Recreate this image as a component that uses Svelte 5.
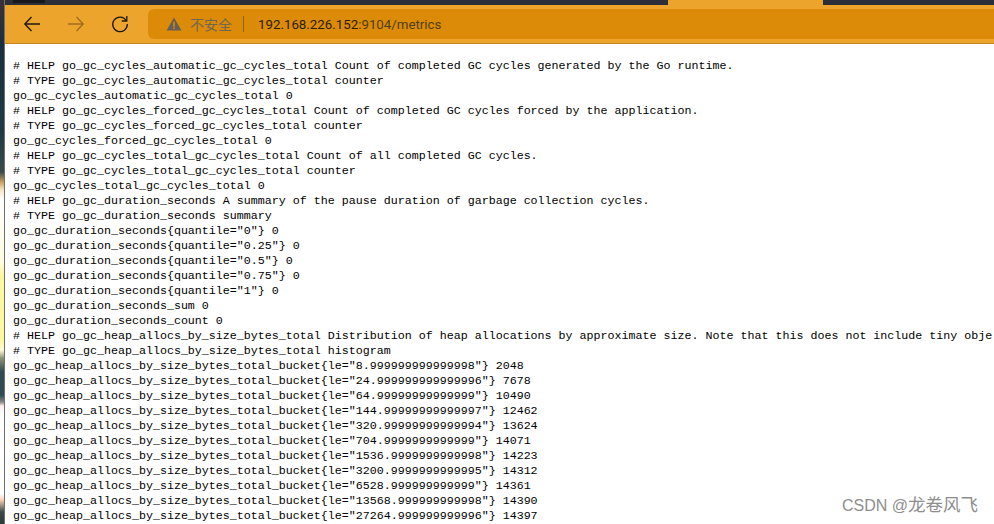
<script>
  const lines = `# HELP go_gc_cycles_automatic_gc_cycles_total Count of completed GC cycles generated by the Go runtime.
# TYPE go_gc_cycles_automatic_gc_cycles_total counter
go_gc_cycles_automatic_gc_cycles_total 0
# HELP go_gc_cycles_forced_gc_cycles_total Count of completed GC cycles forced by the application.
# TYPE go_gc_cycles_forced_gc_cycles_total counter
go_gc_cycles_forced_gc_cycles_total 0
# HELP go_gc_cycles_total_gc_cycles_total Count of all completed GC cycles.
# TYPE go_gc_cycles_total_gc_cycles_total counter
go_gc_cycles_total_gc_cycles_total 0
# HELP go_gc_duration_seconds A summary of the pause duration of garbage collection cycles.
# TYPE go_gc_duration_seconds summary
go_gc_duration_seconds{quantile="0"} 0
go_gc_duration_seconds{quantile="0.25"} 0
go_gc_duration_seconds{quantile="0.5"} 0
go_gc_duration_seconds{quantile="0.75"} 0
go_gc_duration_seconds{quantile="1"} 0
go_gc_duration_seconds_sum 0
go_gc_duration_seconds_count 0
# HELP go_gc_heap_allocs_by_size_bytes_total Distribution of heap allocations by approximate size. Note that this does not include tiny obje
# TYPE go_gc_heap_allocs_by_size_bytes_total histogram
go_gc_heap_allocs_by_size_bytes_total_bucket{le="8.999999999999998"} 2048
go_gc_heap_allocs_by_size_bytes_total_bucket{le="24.999999999999996"} 7678
go_gc_heap_allocs_by_size_bytes_total_bucket{le="64.99999999999999"} 10490
go_gc_heap_allocs_by_size_bytes_total_bucket{le="144.99999999999997"} 12462
go_gc_heap_allocs_by_size_bytes_total_bucket{le="320.99999999999994"} 13624
go_gc_heap_allocs_by_size_bytes_total_bucket{le="704.9999999999999"} 14071
go_gc_heap_allocs_by_size_bytes_total_bucket{le="1536.9999999999998"} 14223
go_gc_heap_allocs_by_size_bytes_total_bucket{le="3200.9999999999995"} 14312
go_gc_heap_allocs_by_size_bytes_total_bucket{le="6528.999999999999"} 14361
go_gc_heap_allocs_by_size_bytes_total_bucket{le="13568.999999999998"} 14390
go_gc_heap_allocs_by_size_bytes_total_bucket{le="27264.999999999996"} 14397`;
</script>

<div class="screen">
  <div class="rail"></div>
  <div class="main">
    <div class="tabstrip"><div class="blackbit"></div><div class="tab"></div></div>
    <div class="toolbar">
      <svg class="icon" viewBox="0 0 20 20"><path d="M18 10H3M9.500 3 2.800 10l6.700 7" fill="none" stroke="#1c1a14" stroke-width="1.300"/></svg>
      <svg class="icon fwd" viewBox="0 0 20 20"><path d="M2 10h15M10.500 3l6.700 7-6.700 7" fill="none" stroke="#a06c1c" stroke-width="1.300"/></svg>
      <svg class="icon reload" viewBox="0 0 20 20"><path d="M16.200 6.500A7.300 7.300 0 1 0 17.300 10" fill="none" stroke="#1c1a14" stroke-width="1.300"/><path d="M16.800 2v5h-5" fill="none" stroke="#1c1a14" stroke-width="1.300"/></svg>
      <div class="omnibox">
        <svg class="warn" viewBox="0 0 18 16"><path d="M9 .5 17.500 15.500H.5Z" fill="#665f55"/><path d="M8.100 5.500h1.800v5.500H8.100zM8.100 12h1.800v1.800H8.100z" fill="#dc8b08"/></svg>
        <span class="insecure">不安全</span>
        <span class="sep"></span>
        <span class="url">192.168.226.152<span class="port">:9104/metrics</span></span>
      </div>
    </div>
    <pre>{lines}</pre>
  </div>
  <div class="mark">CSDN @<span class="cjk">龙卷风飞</span></div>
</div>

<style>
  :global(body) { margin: 0; background: #fff; }
  .screen { position: relative; width: 994px; height: 524px; overflow: hidden; display: flex; }
  .rail { width: 4px; flex: none; border-right: 1px solid #6f6f6f; background: linear-gradient(#3a3038 0, #1a2f3e 44px, #1d3a44 130px, #3a4a4a 172px, #c8a060 182px, #f6e6c8 190px, #fff 200px, #fffbe0 262px, #fdf8a0 275px, #fdf8a0 340px, #fffbd8 350px, #8d9578 358px, #2f4a50 372px, #2f4a50 395px, #888 402px, #fff0f0 406px, #fff 416px, #fff 494px, #f5cfb0 500px, #3a4a48 512px, #2c3a3a 524px); }
  .main { flex: 1; min-width: 0; display: flex; flex-direction: column; }
  .tabstrip { height: 5px; background: #2c2f38; display: flex; justify-content: space-between; padding: 0 171px 0 8px; flex: none; }
  .blackbit { width: 32px; height: 3px; background: #17181c; }
  .tab { width: 155px; background: #eda42c; }
  .toolbar { height: 39px; flex: none; box-sizing: border-box; background: #eda42c; border-bottom: 1px solid #c3851e; display: flex; align-items: center; padding-left: 17px; }
  .icon { width: 20px; height: 20px; flex: none; margin-right: 24px; }
  .reload { margin-right: 18px; }
  .omnibox { flex: 1; height: 30px; background: #dc8b08; border-radius: 6px 0 0 6px; display: flex; align-items: center; padding-left: 18px; font: 14px "Noto Sans CJK SC", "Liberation Sans", sans-serif; }
  .warn { width: 16px; height: 14px; flex: none; }
  .insecure { color: #6f6750; margin-left: 8px; font-size: 14px; }
  .sep { width: 1px; height: 16px; background: #8f6420; margin: 0 14px 0 11px; }
  .url { color: #2b2008; font-family: Roboto, "Liberation Sans", sans-serif; font-size: 13.300px; }
  .port { color: #51400e; }
  pre { margin: 15px 0 0 8px; font: 11.670px/15px "Liberation Mono", monospace; color: #000; white-space: pre; }
  .mark { position: absolute; right: 16px; bottom: 8px; font: 16px "Liberation Sans", "Noto Sans CJK SC", sans-serif; color: #8e8e8e; }
  .cjk { font-size: 17.500px; }
</style>
